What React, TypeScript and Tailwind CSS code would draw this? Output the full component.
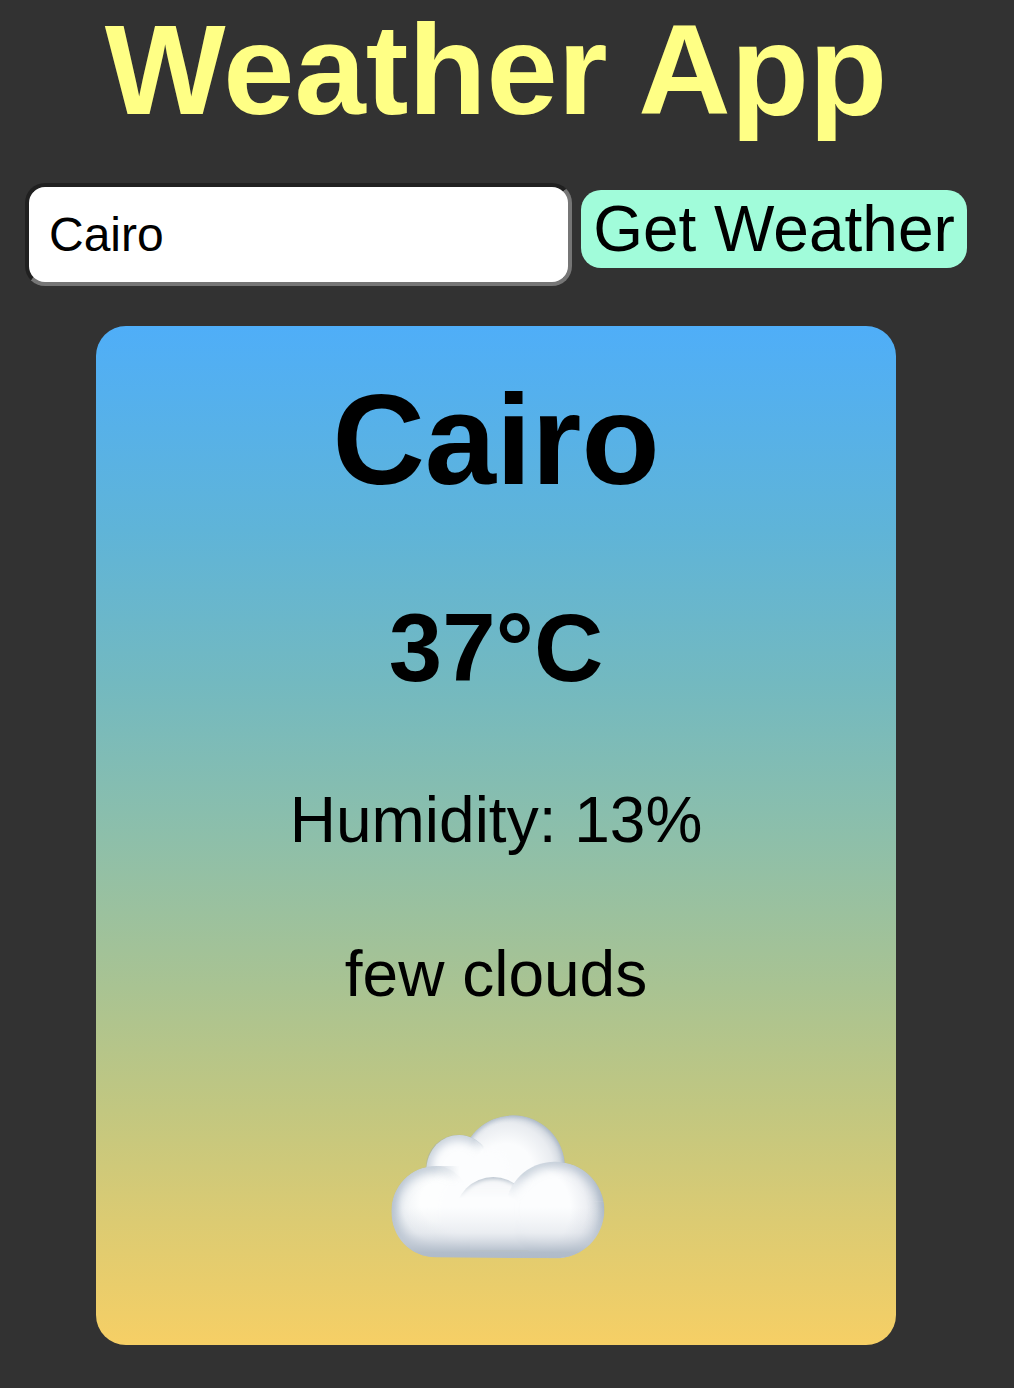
function Cloud() {
  return (
    <svg className="mt-[104px] ml-[4px] h-[144px] w-[214px] shrink-0" viewBox="63 75 642 432" aria-label="cloud">
      <defs>
        <filter id="soft" x="-30%" y="-30%" width="160%" height="160%">
          <feGaussianBlur stdDeviation="17" />
        </filter>
        <filter id="fine" x="-30%" y="-30%" width="160%" height="160%">
          <feGaussianBlur stdDeviation="6" />
        </filter>
        <linearGradient id="base" x1="0" y1="350" x2="0" y2="506" gradientUnits="userSpaceOnUse">
          <stop offset="0" stopColor="#d8dde4" stopOpacity="0" />
          <stop offset="0.5" stopColor="#d0d6df" stopOpacity="0.4" />
          <stop offset="0.72" stopColor="#c2cad5" stopOpacity="0.8" />
          <stop offset="0.88" stopColor="#b2bdca" />
          <stop offset="1" stopColor="#afbac8" />
        </linearGradient>
        <radialGradient id="rightShade" cx="475" cy="355" r="230" gradientUnits="userSpaceOnUse">
          <stop offset="0.55" stopColor="#fcfdfe" />
          <stop offset="0.75" stopColor="#eef0f4" />
          <stop offset="0.9" stopColor="#d9dee5" />
          <stop offset="1" stopColor="#bcc5d0" />
        </radialGradient>
        <radialGradient id="leftShade" cx="215" cy="335" r="160" gradientUnits="userSpaceOnUse">
          <stop offset="0.4" stopColor="#fdfefe" />
          <stop offset="0.75" stopColor="#f0f3f6" />
          <stop offset="1" stopColor="#ccd4dd" />
        </radialGradient>
        <radialGradient id="topShade" cx="410" cy="240" r="175" gradientUnits="userSpaceOnUse">
          <stop offset="0.45" stopColor="#fbfcfd" />
          <stop offset="0.8" stopColor="#e9ecf0" />
          <stop offset="1" stopColor="#cbd2db" />
        </radialGradient>
        <linearGradient id="fadeSmall" x1="305" y1="160" x2="335" y2="185" gradientUnits="userSpaceOnUse">
          <stop offset="0" stopColor="white" />
          <stop offset="1" stopColor="black" />
        </linearGradient>
        <linearGradient id="fadeLeft" x1="190" y1="0" x2="270" y2="0" gradientUnits="userSpaceOnUse">
          <stop offset="0" stopColor="white" />
          <stop offset="1" stopColor="black" />
        </linearGradient>
        <linearGradient id="fadeMid" x1="0" y1="262" x2="0" y2="325" gradientUnits="userSpaceOnUse">
          <stop offset="0" stopColor="white" />
          <stop offset="1" stopColor="black" />
        </linearGradient>
        <linearGradient id="fadeRight" x1="420" y1="325" x2="455" y2="250" gradientUnits="userSpaceOnUse">
          <stop offset="0" stopColor="black" />
          <stop offset="1" stopColor="white" />
        </linearGradient>
        <linearGradient id="fadeEdge" x1="430" y1="0" x2="600" y2="0" gradientUnits="userSpaceOnUse">
          <stop offset="0" stopColor="black" />
          <stop offset="1" stopColor="white" />
        </linearGradient>
        <mask id="maskSmall" maskUnits="userSpaceOnUse" x="63" y="75" width="642" height="432"><rect x="63" y="75" width="642" height="432" fill="url(#fadeSmall)" /></mask>
        <mask id="maskLeft" maskUnits="userSpaceOnUse" x="63" y="75" width="642" height="432"><rect x="63" y="75" width="642" height="432" fill="url(#fadeLeft)" /></mask>
        <mask id="maskMid" maskUnits="userSpaceOnUse" x="63" y="75" width="642" height="432"><rect x="63" y="75" width="642" height="432" fill="url(#fadeMid)" /></mask>
        <mask id="maskRight" maskUnits="userSpaceOnUse" x="63" y="75" width="642" height="432">
          <rect x="63" y="75" width="642" height="260" fill="url(#fadeRight)" />
          <rect x="63" y="335" width="642" height="172" fill="url(#fadeEdge)" />
        </mask>
        <clipPath id="top"><circle cx="429" cy="232" r="156" /></clipPath>
        <clipPath id="small"><circle cx="266" cy="232" r="98" /></clipPath>
        <clipPath id="left"><path d="M200 228C120 228 64 290 64 364C64 440 120 502 200 502H340V228Z" /></clipPath>
        <clipPath id="mid"><circle cx="370" cy="376" r="115" /></clipPath>
        <clipPath id="right"><ellipse cx="555" cy="360" rx="148" ry="145" /></clipPath>
        <clipPath id="body"><path d="M200 228C120 228 64 290 64 364C64 440 120 502 200 502L555 505C640 505 703 440 703 360C703 280 639 215 555 215C500 215 455 235 427 270L360 262L270 300L250 240Z" /></clipPath>
      </defs>
      <g clipPath="url(#top)">
        <circle cx="429" cy="232" r="156" fill="url(#topShade)" />
        <circle cx="429" cy="232" r="160" fill="none" stroke="#94a6b9" strokeWidth="20" filter="url(#fine)" opacity="0.65" />
        <ellipse cx="350" cy="235" rx="70" ry="62" fill="#fcfdfe" filter="url(#soft)" />
      </g>
      <g clipPath="url(#small)">
        <path d="M168 250C168 120 310 105 340 180V260H168Z" fill="#fcfdfe" />
        <g mask="url(#maskSmall)">
          <circle cx="266" cy="232" r="102" fill="none" stroke="#94a6b9" strokeWidth="20" filter="url(#soft)" />
        </g>
      </g>
      <ellipse cx="325" cy="240" rx="55" ry="40" fill="#fcfdfe" filter="url(#fine)" />
      <path d="M195 236L250 244L345 225L427 272L490 260L490 480H180Z" fill="#fcfdfe" />
      <g clipPath="url(#left)">
        <path d="M200 228C120 228 64 290 64 364C64 440 120 502 200 502H300V310C280 260 240 228 200 228Z" fill="url(#leftShade)" />
        <ellipse cx="290" cy="365" rx="80" ry="110" fill="#fcfdfe" filter="url(#soft)" />
        <g mask="url(#maskLeft)">
          <path d="M270 250C250 236 226 226 200 226C118 226 62 290 62 364C62 440 120 504 200 504" fill="none" stroke="#94a6b9" strokeWidth="20" filter="url(#soft)" />
        </g>
      </g>
      <g clipPath="url(#mid)">
        <g mask="url(#maskMid)">
          <circle cx="370" cy="376" r="115" fill="#f3f5f7" />
          <circle cx="370" cy="376" r="116" fill="none" stroke="#a6b3c1" strokeWidth="12" filter="url(#fine)" />
        </g>
      </g>
      <g clipPath="url(#right)">
        <ellipse cx="555" cy="360" rx="148" ry="145" fill="url(#rightShade)" />
        <g mask="url(#maskRight)">
          <ellipse cx="555" cy="360" rx="151" ry="148" fill="none" stroke="#94a6b9" strokeWidth="20" filter="url(#soft)" />
        </g>
      </g>
      <g clipPath="url(#body)">
        <rect x="63" y="350" width="642" height="157" fill="url(#base)" />
      </g>
    </svg>
  );
}

export default function App() {
  return (
    <div className="flex h-[1388px] w-[1014px] flex-col overflow-hidden bg-[#323232] font-['Liberation_Sans',Arial,sans-serif] text-black">
      <h1 className="w-[992px] text-center text-[128px] leading-[139px] font-bold text-[#ffff85]">Weather App</h1>
      <form className="mt-[44px] flex pl-[25px]" onSubmit={(e) => e.preventDefault()}>
        <input defaultValue="Cairo" className="h-[103px] w-[547px] rounded-[20px] border-4 border-t-[#202020] border-l-[#202020] border-r-[#767676] border-b-[#767676] bg-white px-[20px] text-[48px]" />
        <button className="mt-[7px] ml-[9px] h-[78px] w-[386px] rounded-[20px] bg-[#a1fcda] text-[64px] leading-[78px] whitespace-nowrap">Get Weather</button>
      </form>
      <main className="mt-[40px] ml-[96px] flex h-[1019px] w-[800px] flex-col items-center rounded-[30px] bg-[linear-gradient(180deg,#4faef8_0%,#5fb4d8_20%,#73b9c0_35%,#8dbfaa_50%,#a9c392_65%,#c2c780_77%,#dccb72_88%,#f6cf65_100%)]">
        <h2 className="mt-[40px] text-[128px] leading-[147px] font-bold">Cairo</h2>
        <p className="mt-[80px] text-[96px] leading-[110px] font-bold">37°C</p>
        <p className="mt-[80px] text-[64px] leading-[74px]">Humidity: 13%</p>
        <p className="mt-[80px] text-[64px] leading-[74px]">few clouds</p>
        <Cloud />
      </main>
    </div>
  );
}
